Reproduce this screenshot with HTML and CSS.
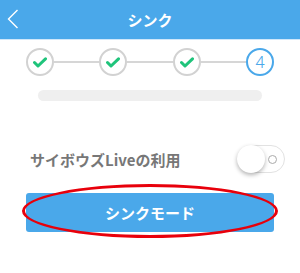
FILE: index.html
```html
<!DOCTYPE html>
<html>
<head>
<meta charset="utf-8">
<link rel="stylesheet" href="styles.css">
</head>
<body>
<div class="page">
  <header class="header">
    <svg class="back" width="12" height="20" viewBox="0 0 12 20"><path d="M10.5 1 L1.5 10 L10.5 19" fill="none" stroke="#fff" stroke-width="1.4"/></svg>
    <div class="title">シンク</div>
  </header>
  <div class="steps">
    <div class="step done"><svg width="14" height="11" viewBox="0 0 14 11"><path d="M1.5 5.5 L5 9 L12.5 1.8" fill="none" stroke="#1fc47b" stroke-width="3" stroke-linecap="round" stroke-linejoin="round"/></svg></div>
    <div class="line"></div>
    <div class="step done"><svg width="14" height="11" viewBox="0 0 14 11"><path d="M1.5 5.5 L5 9 L12.5 1.8" fill="none" stroke="#1fc47b" stroke-width="3" stroke-linecap="round" stroke-linejoin="round"/></svg></div>
    <div class="line"></div>
    <div class="step done"><svg width="14" height="11" viewBox="0 0 14 11"><path d="M1.5 5.5 L5 9 L12.5 1.8" fill="none" stroke="#1fc47b" stroke-width="3" stroke-linecap="round" stroke-linejoin="round"/></svg></div>
    <div class="line"></div>
    <div class="step current">4</div>
  </div>
  <div class="bar"></div>
  <div class="row">
    <span class="label">サイボウズLiveの利用</span>
    <div class="toggle"><div class="knob"></div><div class="ring"></div></div>
  </div>
  <div class="btn-wrap">
    <div class="btn">シンクモード</div>
    <div class="circle-mark"></div>
  </div>
</div>
</body>
</html>
```
FILE: styles.css
```css
* { box-sizing: border-box; }
html, body { margin: 0; padding: 0; background: #fff; }
body { font-family: "Noto Sans CJK JP", "Noto Sans", sans-serif; }
.page { width: 300px; height: 273px; overflow: hidden; }
.header {
  height: 40px;
  background: #4aa8ea;
  border-bottom: 1px solid #cfe7fa;
  display: flex;
  align-items: center;
  justify-content: center;
  position: relative;
}
.back { position: absolute; left: 7px; top: 9px; }
.title { color: #fff; font-size: 15px; font-weight: bold; letter-spacing: 0; }
.steps {
  display: flex;
  align-items: center;
  margin: 8px 26px 0;
  height: 28px;
}
.step {
  width: 28px; height: 28px;
  border-radius: 50%;
  display: flex; align-items: center; justify-content: center;
  flex: none;
}
.step.done { border: 2px solid #d2d2d2; }
.step.done svg { margin-top: 1px; }
.step.current {
  border: 2.5px solid #4aa8ea;
  color: #4aa8ea;
  font-family: "Roboto", "Liberation Sans", sans-serif;
  font-size: 17px;
  font-weight: 300;
}
.line { flex: 1; height: 2px; background: #d6d6d6; }
.bar {
  margin: 14px 38px 0;
  height: 11px;
  background: #efefef;
  border-radius: 6px;
}
.row {
  display: flex;
  align-items: center;
  justify-content: space-between;
  margin-top: 44px;
  padding: 0 15px 0 30px;
  height: 28px;
}
.label { color: #777; font-size: 15px; font-weight: bold; }
.toggle {
  width: 48px; height: 28px;
  border: 1px solid #e2e2e2;
  border-radius: 14px;
  position: relative;
  display: flex; align-items: center; justify-content: flex-end;
  padding-right: 7px;
}
.knob {
  position: absolute; left: -1px; top: -1px;
  width: 28px; height: 28px; border-radius: 50%;
  background: #fff;
  box-shadow: 0 2px 4px rgba(0,0,0,0.3);
}
.ring { width: 9px; height: 9px; border: 1px solid #aaa; border-radius: 50%; }
.btn-wrap { position: relative; margin: 20px 26px 0; }
.btn {
  height: 39px;
  background: #4aa8ea;
  border-radius: 3px;
  color: #fff;
  font-size: 15px;
  font-weight: bold;
  display: flex; align-items: center; justify-content: center;
}
.circle-mark {
  position: absolute;
  left: -4px; top: -9px;
  width: 256px; height: 54px;
  border: 3px solid #e8000b;
  border-radius: 50%;
}
```
